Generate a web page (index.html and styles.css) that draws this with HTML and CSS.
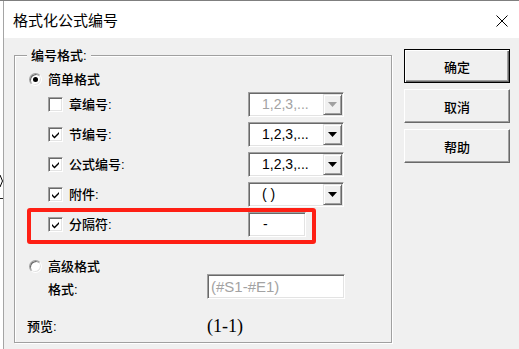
FILE: index.html
```html
<!DOCTYPE html>
<html lang="zh-CN">
<head>
  <meta charset="UTF-8">
  <title>格式化公式编号</title>
  <link rel="stylesheet" href="styles.css">
</head>
<body>
  <div class="backdrop">
    <svg class="bd-glyph" width="3" height="12" viewBox="0 0 3 12"><path d="M0 0 L2.5 6 L0 12" stroke="#000" fill="none"/></svg>
    <div class="bd-line"></div>
  </div>
  <div class="window">
    <div class="titlebar">
      <span class="title">格式化公式编号</span>
      <svg class="close" width="12" height="12" viewBox="0 0 12 12"><path d="M0.5 0.5 L11.5 11.5 M11.5 0.5 L0.5 11.5" stroke="#000" stroke-width="1"/></svg>
    </div>

    <div class="content">
      <div class="group">
        <span class="legend">编号格式:</span>
        <div class="mark"></div>

        <div class="radio-row">
          <span class="radio checked"></span>
          <span>简单格式</span>
        </div>

        <div class="opts">
          <div class="opt">
            <span class="check"></span>
            <span class="opt-name">章编号:</span>
            <div class="combo disabled">
              <span class="combo-val">1,2,3,...</span>
              <span class="combo-btn"><svg width="9" height="5" viewBox="0 0 9 5"><polygon points="0,0 9,0 4.5,5"/></svg></span>
            </div>
          </div>
          <div class="opt">
            <span class="check on"><svg width="9" height="8" viewBox="0 0 9 8"><path d="M1 3 L3.5 5.5 L8 1 L8 3 L3.5 7.5 L1 5 Z"/></svg></span>
            <span class="opt-name">节编号:</span>
            <div class="combo">
              <span class="combo-val">1,2,3,...</span>
              <span class="combo-btn"><svg width="9" height="5" viewBox="0 0 9 5"><polygon points="0,0 9,0 4.5,5"/></svg></span>
            </div>
          </div>
          <div class="opt">
            <span class="check on"><svg width="9" height="8" viewBox="0 0 9 8"><path d="M1 3 L3.5 5.5 L8 1 L8 3 L3.5 7.5 L1 5 Z"/></svg></span>
            <span class="opt-name">公式编号:</span>
            <div class="combo">
              <span class="combo-val">1,2,3,...</span>
              <span class="combo-btn"><svg width="9" height="5" viewBox="0 0 9 5"><polygon points="0,0 9,0 4.5,5"/></svg></span>
            </div>
          </div>
          <div class="opt">
            <span class="check on"><svg width="9" height="8" viewBox="0 0 9 8"><path d="M1 3 L3.5 5.5 L8 1 L8 3 L3.5 7.5 L1 5 Z"/></svg></span>
            <span class="opt-name">附件:</span>
            <div class="combo">
              <span class="combo-val">( )</span>
              <span class="combo-btn"><svg width="9" height="5" viewBox="0 0 9 5"><polygon points="0,0 9,0 4.5,5"/></svg></span>
            </div>
          </div>
          <div class="opt">
            <span class="check on"><svg width="9" height="8" viewBox="0 0 9 8"><path d="M1 3 L3.5 5.5 L8 1 L8 3 L3.5 7.5 L1 5 Z"/></svg></span>
            <span class="opt-name">分隔符:</span>
            <div class="edit sep">-</div>
          </div>
        </div>

        <div class="radio-row adv">
          <span class="radio"></span>
          <span>高级格式</span>
        </div>

        <div class="fmt-row">
          <span class="fmt-name">格式:</span>
          <div class="edit fmt">(#S1-#E1)</div>
        </div>

        <div class="preview-row">
          <span class="preview-name">预览:</span>
          <span class="preview-val">(1-1)</span>
        </div>
      </div>

      <div class="buttons">
        <button class="btn default">确定</button>
        <button class="btn">取消</button>
        <button class="btn">帮助</button>
      </div>
    </div>
  </div>
</body>
</html>
```

FILE: styles.css
```css
body {
  margin: 0;
  width: 519px;
  height: 349px;
  box-sizing: border-box;
  overflow: hidden;
  display: flex;
  background: #fff;
  border-top: 1px solid #7f7f7f;
  font: 500 13px "Liberation Sans", "Noto Sans CJK SC", sans-serif;
  color: #000;
}

.backdrop {
  width: 3px;
  flex: none;
  overflow: hidden;
}

.bd-glyph {
  display: block;
  margin-top: 174px;
}

.bd-line {
  height: 1px;
  margin-top: 11px;
  background: #222;
}

.window {
  flex: 1;
  display: flex;
  flex-direction: column;
  border-left: 1px solid #a5a5a5;
  background: #f0f0f0;
}

.titlebar {
  height: 37px;
  box-sizing: border-box;
  display: flex;
  align-items: center;
  justify-content: space-between;
  padding: 3px 11px 0 9px;
  background: #fff;
}

.title {
  font-size: 15px;
  font-weight: 400;
  line-height: 20px;
}

.close {
  display: block;
}

.content {
  display: flex;
  padding-left: 10px;
}

/* group box */
.group {
  position: relative;
  width: 378px;
  height: 288px;
  box-sizing: border-box;
  margin-top: 17px;
  padding: 14px 0 0 14px;
  border: 1px solid #a0a0a0;
  box-shadow: 1px 1px 0 #fff, inset 1px 1px 0 #fff;
}

.legend {
  position: absolute;
  top: -9px;
  left: 12px;
  padding: 0 4px;
  line-height: 17px;
  background: #f0f0f0;
}

.mark {
  position: absolute;
  left: 12px;
  top: 152px;
  width: 289px;
  height: 36px;
  box-sizing: border-box;
  border: 4px solid #fe1f14;
  border-radius: 3px;
}

.radio-row {
  display: flex;
  align-items: center;
  gap: 6px;
  height: 19px;
  line-height: 17px;
}

.radio-row.adv {
  height: 16px;
  margin-top: 21px;
}

.radio {
  width: 13px;
  height: 13px;
  box-sizing: border-box;
  border-radius: 50%;
  border: 1px solid;
  border-color: #a0a0a0 #fff #fff #a0a0a0;
  box-shadow: inset 1px 1px 0 #696969, inset -1px -1px 0 #e3e3e3;
  background: #fff;
  display: flex;
  align-items: center;
  justify-content: center;
}

.radio.checked::after {
  content: "";
  width: 5px;
  height: 5px;
  border-radius: 50%;
  background: #000;
}

.opts {
  display: flex;
  flex-direction: column;
  gap: 5px;
  margin-top: 3px;
}

.opt {
  display: flex;
  align-items: center;
  height: 25px;
  padding-left: 19px;
}

.check {
  width: 15px;
  height: 15px;
  box-sizing: border-box;
  flex: none;
  border: 1px solid;
  border-color: #a0a0a0 #fff #fff #a0a0a0;
  box-shadow: inset 1px 1px 0 #696969, inset -1px -1px 0 #e3e3e3;
  background: #fff;
  display: flex;
  align-items: center;
  justify-content: center;
}

.check svg {
  display: block;
}

.opt-name {
  width: 179px;
  margin-left: 6px;
  line-height: 17px;
}

/* sunken fields */
.combo,
.edit {
  height: 25px;
  box-sizing: border-box;
  border: 1px solid;
  border-color: #a0a0a0 #fff #fff #a0a0a0;
  box-shadow: inset 1px 1px 0 #696969, inset -1px -1px 0 #e3e3e3;
  background: #fff;
}

.combo {
  width: 96px;
  display: flex;
  padding: 1px;
}

.combo-val {
  flex: 1;
  padding-left: 12px;
  font-size: 14px;
  font-weight: 400;
  line-height: 21px;
}

.combo-btn {
  width: 19px;
  box-sizing: border-box;
  display: flex;
  align-items: center;
  justify-content: center;
  background: #f0f0f0;
  border: 1px solid;
  border-color: #e3e3e3 #696969 #696969 #e3e3e3;
  box-shadow: inset 1px 1px 0 #fff, inset -1px -1px 0 #a0a0a0;
}

.combo-btn svg {
  display: block;
  fill: #000;
}

.combo.disabled .combo-val {
  color: #a3a3a3;
}

.combo.disabled .combo-btn svg {
  fill: #a0a0a0;
}

.edit {
  padding-left: 14px;
  font-size: 14px;
  font-weight: 400;
  line-height: 23px;
}

.edit.sep {
  width: 58px;
}

.edit.fmt {
  width: 138px;
  padding-left: 3px;
  font-size: 15px;
  color: #a3a3a3;
}

.fmt-row {
  display: flex;
  align-items: center;
  height: 25px;
  padding-left: 19px;
}

.fmt-name {
  width: 159px;
  padding-top: 6px;
  line-height: 17px;
}

.preview-row {
  display: flex;
  align-items: center;
  height: 24px;
  margin: 15px 0 0 -2px;
}

.preview-name {
  width: 180px;
  line-height: 17px;
}

.preview-val {
  font: 18px "Liberation Serif", serif;
}

/* buttons */
.buttons {
  display: flex;
  flex-direction: column;
  gap: 6px;
  margin: 11px 0 0 12px;
}

.btn {
  width: 106px;
  height: 34px;
  box-sizing: border-box;
  padding: 0;
  background: #f0f0f0;
  border: 1px solid;
  border-color: #fff #696969 #696969 #fff;
  box-shadow: inset -1px -1px 0 #a0a0a0;
  font: 500 13px "Liberation Sans", "Noto Sans CJK SC", sans-serif;
  color: #000;
}

.btn.default {
  border-color: #000;
  box-shadow: inset 1px 1px 0 #fff, inset -1px -1px 0 #696969, inset -2px -2px 0 #a0a0a0;
}
```
